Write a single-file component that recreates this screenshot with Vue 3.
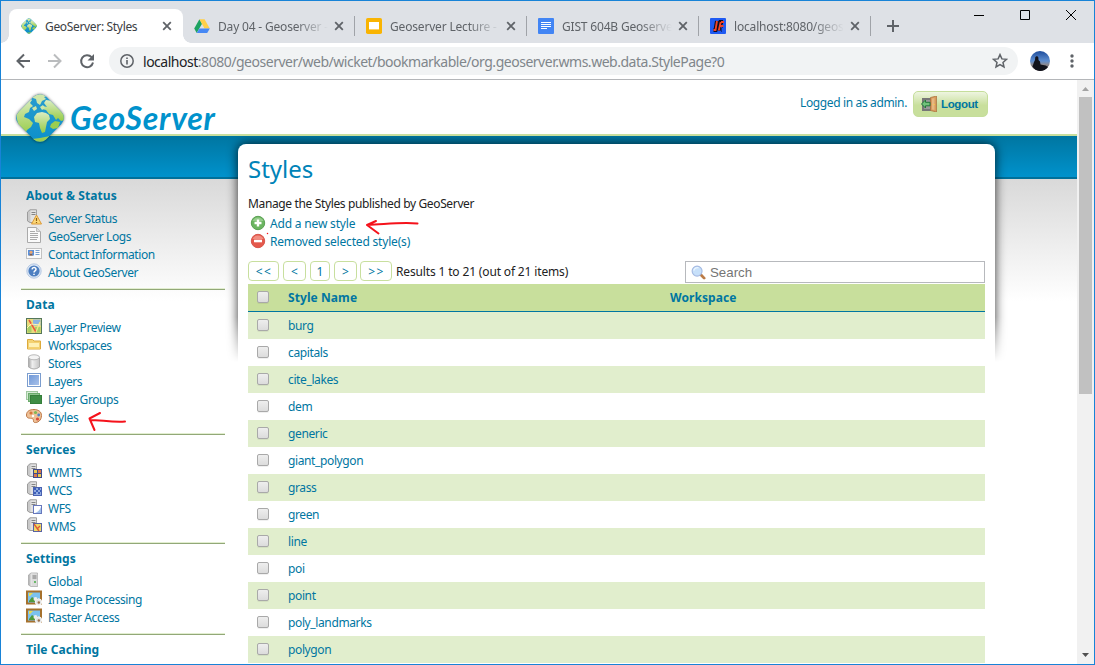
<script setup>
const tabs = [
  { title: 'Day 04 - Geoserver -', icon: 'drive' },
  { title: 'Geoserver Lecture - G', icon: 'slides' },
  { title: 'GIST 604B Geoserver', icon: 'docs' },
  { title: 'localhost:8080/geose', icon: 'jetty' },
]

const sections = [
  {
    title: 'About & Status',
    items: [
      { label: 'Server Status', icon: 'status' },
      { label: 'GeoServer Logs', icon: 'page' },
      { label: 'Contact Information', icon: 'card' },
      { label: 'About GeoServer', icon: 'help' },
    ],
  },
  {
    title: 'Data',
    items: [
      { label: 'Layer Preview', icon: 'map' },
      { label: 'Workspaces', icon: 'folder' },
      { label: 'Stores', icon: 'database' },
      { label: 'Layers', icon: 'layer' },
      { label: 'Layer Groups', icon: 'layers' },
      { label: 'Styles', icon: 'palette' },
    ],
  },
  {
    title: 'Services',
    items: [
      { label: 'WMTS', icon: 'wmts' },
      { label: 'WCS', icon: 'wcs' },
      { label: 'WFS', icon: 'wfs' },
      { label: 'WMS', icon: 'wms' },
    ],
  },
  {
    title: 'Settings',
    items: [
      { label: 'Global', icon: 'server' },
      { label: 'Image Processing', icon: 'picture' },
      { label: 'Raster Access', icon: 'picture' },
    ],
  },
  { title: 'Tile Caching', items: [] },
]

const pager = ['<<', '<', '1', '>', '>>']

const rows = [
  'burg', 'capitals', 'cite_lakes', 'dem', 'generic', 'giant_polygon', 'grass',
  'green', 'line', 'poi', 'point', 'poly_landmarks', 'polygon',
]
</script>

<template>
  <div class="window">
    <svg class="defs" width="0" height="0" aria-hidden="true">
      <defs>
        <linearGradient id="gGlobe" x1="0" y1="0" x2="0" y2="1">
          <stop offset="0" stop-color="#dcedc3" /><stop offset="1" stop-color="#96cb45" />
        </linearGradient>
        <linearGradient id="gSea" x1="0" y1="0" x2="0" y2="1">
          <stop offset="0" stop-color="#2a9dcf" /><stop offset="1" stop-color="#0b8fca" />
        </linearGradient>
        <linearGradient id="gGrey" x1="0" y1="0" x2="1" y2="0">
          <stop offset="0" stop-color="#a5a5a5" /><stop offset=".35" stop-color="#efefef" /><stop offset="1" stop-color="#c4c4c4" />
        </linearGradient>
        <linearGradient id="gBlue" x1="0" y1="0" x2="1" y2="1">
          <stop offset="0" stop-color="#6f98d8" /><stop offset="1" stop-color="#a9c2ea" />
        </linearGradient>
        <linearGradient id="gSky" x1="0" y1="0" x2="0" y2="1">
          <stop offset="0" stop-color="#1d4c9c" /><stop offset=".5" stop-color="#5f8fd0" /><stop offset=".68" stop-color="#8b8a92" /><stop offset="1" stop-color="#3c2b2c" />
        </linearGradient>
        <clipPath id="cGlobe"><rect x="-19.5" y="-19.5" width="39" height="39" rx="9" transform="translate(25 25) rotate(45)" /></clipPath>
      </defs>

      <symbol id="i-globe" viewBox="0 0 50 50">
        <g clip-path="url(#cGlobe)">
          <rect width="50" height="50" fill="url(#gSea)" />
          <path fill="url(#gGlobe)" d="M0 16 14 4l3 3-2 3 3 3-3 2-1 4-4 2-1 3 5 2 4 4-2 4-4 3-3 6L3 31Z" />
          <path fill="url(#gGlobe)" d="m22 20 5-1 4 1 3 2 1 4-3 3-1 5-1 5-3 1-2-5-1-5-4-1-1-5Z" />
          <path fill="url(#gGlobe)" d="m31 7 7 1 12 14v5l-4 1-3-3-2 2-3-5-4-1-3-4-4-1 1-3 4 1-3-4Z" />
          <path fill="#cfe7a9" d="m18 3 10-3 4 3-3 1 2 2-4 2-2 4-3-2-1-4-3-1ZM17 15l4-2 1 3-3 2ZM25 14l3-2 2 3-3 2Z" />
          <path fill="#9bcd50" d="m36 31 4-3 5 1-2 6-5 1-3-2ZM17 46l8-1 10-2-8 7h-6Z" />
        </g>
      </symbol>
      <symbol id="i-drive" viewBox="0 0 16 14">
        <path fill="#1da362" d="M5.4.2 8 4.7 2.7 13.9.2 9.4Z" /><path fill="#ffcf48" d="M5.4.2h5.2l5.2 9.2h-5.3Z" /><path fill="#4688f4" d="M5.4 9.4h10.4l-2.6 4.5H2.7Z" />
      </symbol>
      <symbol id="i-slides" viewBox="0 0 16 16"><rect width="16" height="16" rx="1.8" fill="#f9b402" /><rect x="3" y="4" width="10" height="7.4" fill="#fff" /></symbol>
      <symbol id="i-docs" viewBox="0 0 16 16"><rect width="16" height="16" rx="1" fill="#4285f4" /><path stroke="#fff" d="M3 4.5h10M3 6.5h10M3 8.5h10M3 10.5h6" /></symbol>
      <symbol id="i-jetty" viewBox="0 0 16 16"><rect width="16" height="16" rx="1" fill="#1f5af2" /><path d="M7 3 5.500 12H3.500M13 4h-2.500L8.500 12.500M12.500 8h.5M11.500 12h.5" fill="none" stroke="#0b0b20" stroke-width="4" /><path d="M7 3 5.500 12H3.500M10.700 4 8.800 12.500M11 4h3M10 8h3.500" fill="none" stroke="#f04426" stroke-width="1.900" /></symbol>

      <symbol id="i-server" viewBox="0 0 16 16">
        <path d="M2.500 3 5 1h6.500v13.500H5L2.500 13Z" fill="url(#gGrey)" stroke="#aaa" stroke-width=".8" /><path d="M5.500 1.500h5.800v12.600H5.500Z" fill="#dcdcdc" /><path d="M6.500 4h4M6.500 6h4" stroke="#777" /><circle cx="9" cy="10" r=".9" fill="#35a835" />
      </symbol>
      <symbol id="i-box" viewBox="0 0 16 16">
        <path d="M1.500 3 4 .8h6.500v12.700H4L1.500 12Z" fill="#c9c9c9" stroke="#9c9c9c" /><path d="M4.500 1.500h5.600v11.500H4.500Z" fill="#e2e2e2" /><path d="M5.500 3.500h4M5.500 5.500h4" stroke="#858585" />
      </symbol>
      <symbol id="i-status" viewBox="0 0 16 16"><use href="#i-box" /><path d="M10.500 6 15.500 15h-10Z" fill="#fbd775" stroke="#dd9a38" /><path d="M10.500 9v3M10.500 13v1" stroke="#8c5b14" stroke-width="1.200" /></symbol>
      <symbol id="i-page" viewBox="0 0 16 16"><path d="M1.500.5h9l4 4v11h-13Z" fill="#fafafa" stroke="#aaa" /><path d="M10.500.5v4h4" fill="#ddd" stroke="#bbb" /><path d="M4 4.500h5M4 6.500h8M4 8.500h8M4 10.500h8M4 12.500h7" stroke="#aaa" /></symbol>
      <symbol id="i-card" viewBox="0 0 16 16"><rect x=".5" y="3.500" width="15" height="10" fill="#fafafa" stroke="#c2c2c2" /><rect x="2" y="5" width="6" height="5.500" fill="#5b8fd8" /><circle cx="5" cy="7.300" r="1.500" fill="#efa66c" /><path d="M3 10.500q2-3 4 0" fill="#895126" /><path d="M9.500 5.500h4M9.500 7.500h4M9.500 9.500h4" stroke="#79a0d2" /></symbol>
      <symbol id="i-help" viewBox="0 0 16 16"><circle cx="8" cy="8" r="7.200" fill="#dce7f5" stroke="#a9bfdd" stroke-width=".8" /><circle cx="8" cy="8" r="5.600" fill="#4d7fc1" /><path d="M6 6.400C6.200 4 10 4 10 6.300 10 8 8 7.700 8 9.400M8 10.700V12" fill="none" stroke="#fff" stroke-width="1.500" /></symbol>
      <symbol id="i-map" viewBox="0 0 16 16"><rect x=".5" y=".5" width="15" height="15" fill="#e8dc7d" stroke="#55775a" /><path d="M7 1.500h7.500v6H7Z" fill="#8cb4e0" /><path d="M1.500 8h4v6.500h-4ZM9 9h5.500v5.500H9Z" fill="#a8cf67" /><path d="m3 2 7 12" stroke="#ed573e" stroke-width="1.500" /><path d="m14 4-4 10" stroke="#f4e889" stroke-width="1.200" /><path d="m1 10 4-4 9 1" fill="none" stroke="#fff6b0" /></symbol>
      <symbol id="i-folder" viewBox="0 0 16 16"><path d="M1.500 3.500h5l1.500 1.500h6.500v8h-13Z" fill="#f4d272" stroke="#ddaa3c" /><path d="M3 7h10v4H3Z" fill="#fff1b5" /><path d="M2 12.500h12" stroke="#f4cf6b" /></symbol>
      <symbol id="i-database" viewBox="0 0 16 16"><path d="M2.500 3v10q5.500 4 11 0V3Z" fill="url(#gGrey)" stroke="#adadad" /><ellipse cx="8" cy="3.300" rx="5.500" ry="2.500" fill="#f4f4f4" stroke="#b8b8b8" /></symbol>
      <symbol id="i-layer" viewBox="0 0 16 16"><rect x="1.500" y="1.500" width="13" height="13" fill="#fff" stroke="#7b9dce" /><rect x="3" y="3" width="10" height="10" fill="url(#gBlue)" /></symbol>
      <symbol id="i-layers" viewBox="0 0 16 16"><rect x=".5" y="1.500" width="11" height="8" fill="#d7ecd7" stroke="#9fc79f" /><rect x="2.500" y="3.500" width="11" height="8" fill="#8fc48f" stroke="#6cab6c" /><rect x="4.500" y="5.500" width="11" height="8" fill="#3f8d45" stroke="#357f3a" /></symbol>
      <symbol id="i-palette" viewBox="0 0 16 16"><path d="M8 1.500c4 0 7.500 2 7.500 6 0 5-4 7.500-7 7-2-.4 0-3.500-2.300-4C4 10 .5 11 .5 7S4 1.500 8 1.500Z" fill="#edc197" stroke="#bd7746" /><circle cx="5" cy="5" r="1.600" fill="#d8743b" /><circle cx="9.500" cy="4.500" r="1.600" fill="#7fb956" /><circle cx="12.700" cy="7" r="1.400" fill="#4e83c9" /><circle cx="11.500" cy="11" r="1.600" fill="#de4e3b" /><circle cx="7" cy="8" r="1.200" fill="#fff" /></symbol>
      <symbol id="i-wmts" viewBox="0 0 16 16"><use href="#i-box" /><rect x="7" y="6" width="9" height="9" fill="#3f4b8c" /><path d="M8 7h3v3H8ZM12 11h3v3h-3Z" fill="#e9c94d" /><path d="M12 7h3v3h-3ZM8 11h3v3H8Z" fill="#d9764d" /></symbol>
      <symbol id="i-wcs" viewBox="0 0 16 16"><use href="#i-box" /><rect x="7.500" y="6.500" width="8" height="8" fill="#91abe0" stroke="#4a62b2" /><path d="M8 7h2v2H8ZM12 7h2v2h-2ZM10 9h2v2h-2ZM14 9h1v2h-1ZM8 11h2v2H8ZM12 11h2v2h-2Z" fill="#3e60b8" /></symbol>
      <symbol id="i-wfs" viewBox="0 0 16 16"><use href="#i-box" /><rect x="7.500" y="6.500" width="8" height="8" fill="#fff" stroke="#6878bd" /><path d="M9 14q4-1 6-6v6Z" fill="#9ebeea" /></symbol>
      <symbol id="i-wms" viewBox="0 0 16 16"><use href="#i-box" /><rect x="7.500" y="6.500" width="8" height="8" fill="#f0d967" stroke="#5963a4" /><path d="m8 7 5 7M14 9l-3 3" stroke="#df5a37" stroke-width="1.300" /></symbol>
      <symbol id="i-picture" viewBox="0 0 16 16"><rect x="1" y="1.500" width="14" height="12" fill="#7bc2ef" stroke="#a5712d" stroke-width="2" /><path d="M3 11 6 7l3 2 3-1v4H3Z" fill="#4f9b3d" /><path d="M3 3h4l-3 3H3Z" fill="#e7dc54" /><circle cx="12.500" cy="12" r="3.200" fill="#e2e2e2" stroke="#f7f7f7" /><circle cx="12.800" cy="12.500" r="1.200" fill="#9a6e46" /><circle cx="9.500" cy="9" r="2" fill="#ececec" /></symbol>
      <symbol id="i-add" viewBox="0 0 16 16"><circle cx="8" cy="8" r="6.700" fill="#6cb561" stroke="#5ba154" /><path d="M2.500 6a6 6 0 0 1 11 0Z" fill="#96cd8b" /><path d="M8 4.500v7M4.500 8h7" stroke="#fff" stroke-width="2.400" /></symbol>
      <symbol id="i-remove" viewBox="0 0 16 16"><circle cx="8" cy="8" r="6.700" fill="#e4594c" stroke="#d8564c" /><path d="M2.500 6a6 6 0 0 1 11 0Z" fill="#f18d81" /><path d="M4 8h8" stroke="#fff" stroke-width="2.600" /></symbol>
      <symbol id="i-door" viewBox="0 0 16 16"><path d="M1 2h9v13H1Z" fill="#777" /><path d="M3 4h6v9H3Z" fill="#999" /><path d="m9.500 1.500 6-1.500v16l-6-1.500Z" fill="#d79a5d" stroke="#a96f3a" stroke-width=".7" /><path d="M11 2.500 13.500 2v12L11 13.500Z" fill="#e7b780" /><path d="m.5 8 4-4v2.300H9v3.500H4.500V12Z" fill="#71c17a" stroke="#23793a" /><path d="M12.500 8h1v1h-1Z" fill="#ffda3c" /></symbol>
      <symbol id="i-search" viewBox="0 0 16 16"><path d="m10.500 10.500 3.500 3.500" stroke="#bb7c48" stroke-width="3" stroke-linecap="round" /><circle cx="6.500" cy="6.500" r="5.300" fill="#c7e0fa" stroke="#a4b9e2" stroke-width="1.200" /><path d="M3 6a4 4 0 0 1 5-3" fill="none" stroke="#eaf5ff" stroke-width="1.500" /></symbol>
      <symbol id="i-close" viewBox="0 0 10 10"><path d="m1.200 1.200 7.600 7.600M8.800 1.200 1.200 8.800" stroke="#5f6368" stroke-width="1.800" /></symbol>
    </svg>

    <div class="tabstrip">
      <div class="tab active">
        <svg class="fav"><use href="#i-globe" /></svg>
        <span class="tab-title">GeoServer: Styles</span>
        <svg class="close"><use href="#i-close" /></svg>
      </div>
      <div v-for="t in tabs" :key="t.icon" class="tab">
        <svg class="fav"><use :href="'#i-' + t.icon" /></svg>
        <span class="tab-title faded">{{ t.title }}</span>
        <svg class="close"><use href="#i-close" /></svg>
      </div>
      <svg class="plus" viewBox="0 0 12 12"><path d="M6 0v12M0 6h12" stroke="#5f6368" stroke-width="2" /></svg>
      <svg class="controls" viewBox="0 0 104 12" fill="none" stroke="#000"><path d="M0 6.500h10M46.500 1.500h9v9h-9ZM92 1l10 10M102 1 92 11" /></svg>
    </div>

    <div class="toolbar">
      <svg class="nav" viewBox="0 0 82 16" fill="none" stroke-width="2">
        <path d="M14 8H2M8 1.500 1.500 8 8 14.500" stroke="#5f6368" />
        <path d="M32 8h12M38 1.500 44.500 8 38 14.500" stroke="#babcbe" />
        <path d="M75.600 4.200A6 6 0 1 0 77 9.500" stroke="#5f6368" /><path d="M78 1v6.500h-6.500Z" fill="#5f6368" />
      </svg>
      <div class="omnibox">
        <svg class="info" viewBox="0 0 14 14"><circle cx="7" cy="7" r="6.200" fill="none" stroke="#5f6368" stroke-width="1.500" /><path d="M7 6v4.500M7 3.400v1.500" stroke="#5f6368" stroke-width="1.600" /></svg>
        <span class="url"><b>localhost</b>:8080/geoserver/web/wicket/bookmarkable/org.geoserver.wms.web.data.StylePage?0</span>
        <svg class="star" viewBox="0 0 16 16"><path d="m8 1.600 1.900 4.300 4.600.4-3.500 3.100 1 4.600-4-2.400L4 14l1-4.600L1.500 6.300l4.600-.4Z" fill="none" stroke="#5f6368" stroke-width="1.500" /></svg>
      </div>
      <svg class="avatar" viewBox="0 0 20 20"><circle cx="10" cy="10" r="10" fill="url(#gSky)" /><path d="M2.500 15.500 4 11l1-2 .3-3L7 5l1.300 1.300L8.500 9l1.500 1.500.5 3 5 1 2.500 1.500Q15 20 10 20 5 19.500 2.500 15.500Z" fill="#11131c" /></svg>
      <svg class="kebab" viewBox="0 0 4 14"><g fill="#5f6368"><circle cx="2" cy="2" r="1.700" /><circle cx="2" cy="7" r="1.700" /><circle cx="2" cy="12" r="1.700" /></g></svg>
    </div>

    <div class="viewport">
      <div class="page">
        <header class="head">
          <svg class="logo"><use href="#i-globe" /></svg>
          <span class="brand">GeoServer</span>
          <span class="who">Logged in as admin.</span>
          <button class="logout"><svg><use href="#i-door" /></svg>Logout</button>
        </header>
        <div class="band"></div>
        <div class="body">
          <nav class="side">
            <section v-for="s in sections" :key="s.title">
              <h3>{{ s.title }}</h3>
              <ul>
                <li v-for="i in s.items" :key="i.label">
                  <svg><use :href="'#i-' + i.icon" /></svg><span>{{ i.label }}</span>
                </li>
              </ul>
            </section>
          </nav>
          <div class="panel-wrap">
            <div class="shade"></div>
            <main class="panel">
              <h1>Styles</h1>
              <p class="intro">Manage the Styles published by GeoServer</p>
              <div class="action"><svg><use href="#i-add" /></svg><span>Add a new style</span></div>
              <div class="action"><svg><use href="#i-remove" /></svg><span>Removed selected style(s)</span></div>
              <div class="pager">
                <span v-for="(p, n) in pager" :key="p" class="pg" :class="'pg' + n">{{ p }}</span>
                <span class="results">Results 1 to 21 (out of 21 items)</span>
                <div class="search"><svg><use href="#i-search" /></svg>Search</div>
              </div>
              <div class="row th"><i class="cb"></i><span class="name">Style Name</span><span>Workspace</span></div>
              <div v-for="(r, n) in rows" :key="r" class="row" :class="{ odd: n % 2 === 0 }"><i class="cb"></i><span class="name">{{ r }}</span></div>
            </main>
          </div>
        </div>
      </div>
      <div class="scroll">
        <svg viewBox="0 0 7 4"><path d="M3.500 0 7 4H0Z" fill="#a3a3a3" /></svg>
        <div class="thumb"></div>
        <svg class="down" viewBox="0 0 7 4"><path d="M3.500 4 7 0H0Z" fill="#505050" /></svg>
      </div>
    </div>

    <svg class="ink" viewBox="0 0 1095 665" fill="none" stroke="#f5121b" stroke-width="2" stroke-linecap="round" stroke-linejoin="round">
      <path d="M417.500 223.500C402 222 388 224 367.500 225M376 221 367 225 378.500 233.500" />
      <path d="M125 421.500C112 422.500 101 420 90 420M100 413 89.500 418.500 94.500 430" />
      <path d="M267.500 233.500v.1" stroke-width="1.500" />
    </svg>
  </div>
</template>

<style>
body { margin: 0; overflow: hidden; background: #fff; }
</style>

<style scoped>
* { box-sizing: border-box; }
.window { position: relative; width: 1095px; height: 665px; border: 1px solid #1883d7; display: flex; flex-direction: column; overflow: hidden; background: #fff; font-family: "Noto Sans", "Liberation Sans", sans-serif; font-size: 12px; color: #0076a1; white-space: nowrap; }
.defs { position: absolute; }
svg { flex: none; display: block; }

.tabstrip { height: 42px; background: #dee1e6; display: flex; padding: 8px 0 0 8px; flex: none; position: relative; }
.tab { width: 172px; height: 34px; display: flex; align-items: center; padding-left: 11px; color: #5f6368; position: relative; }
.tab.active { width: 174px; padding-left: 12px; background: #fff; border-radius: 8px 8px 0 0; color: #3c4043; }
.tab.active::before, .tab.active::after { content: ""; position: absolute; bottom: 0; width: 8px; height: 8px; }
.tab.active::before { left: -8px; background: radial-gradient(circle at 0 0, #dee1e6 7.5px, #fff 8px); }
.tab.active::after { right: -8px; background: radial-gradient(circle at 100% 0, #dee1e6 7.5px, #fff 8px); }
.tab:not(.active)::after { content: ""; position: absolute; right: 0; top: 7px; height: 20px; width: 1px; background: #a0a3a8; }
.fav { width: 16px; height: 16px; }
.tab-title { margin-left: 8px; letter-spacing: -.33px; }
.tab.active .tab-title { width: 117px; }
.tab-title.faded { width: 116px; letter-spacing: -.18px; -webkit-mask-image: linear-gradient(90deg, #000 78px, transparent 110px); mask-image: linear-gradient(90deg, #000 78px, transparent 110px); }
.close { width: 10px; height: 10px; }
.plus { width: 12px; height: 12px; margin: 11px 0 0 16px; }
.controls { position: absolute; left: 973px; top: 8px; width: 104px; height: 12px; }

.toolbar { height: 37px; flex: none; display: flex; align-items: center; border-bottom: 1px solid #b4b6b9; padding-left: 15px; }
.nav { width: 82px; height: 16px; }
.omnibox { margin-left: 11px; width: 909px; height: 28px; border-radius: 14px; background: #f1f3f4; display: flex; align-items: center; padding: 0 10px 0 11px; color: #80868b; }
.info { width: 14px; height: 14px; }
.url { margin-left: 9px; font-size: 14px; flex: 1; letter-spacing: -.48px; }
.url b { font-weight: 400; color: #202124; }
.star { width: 16px; height: 16px; }
.avatar { width: 20px; height: 20px; margin-left: 12px; }
.kebab { width: 4px; height: 14px; margin-left: 20px; }

.viewport { flex: 1; display: flex; min-height: 0; }
.page { flex: 1; display: flex; flex-direction: column; min-width: 0; }
.head { height: 56px; flex: none; border-bottom: 2px solid #c8df9e; display: flex; position: relative; }
.logo { position: absolute; left: 14px; top: 13px; width: 50px; height: 50px; z-index: 3; filter: drop-shadow(0 0 1.500px rgba(0, 0, 0, .55)); }
.brand { margin: 14px 0 0 69px; width: 160px; font: italic 700 32px/48px Lato, sans-serif; color: #0092cc; letter-spacing: .75px; }
.who { margin: 14px 0 0 auto; line-height: 18px; letter-spacing: -.36px; }
.logout { width: 75px; height: 26px; margin: 11px 89px 0 6px; border: 1px solid #c5de9b; border-radius: 5px; background: linear-gradient(#eef5e0, #c8df9c 55%); color: #0076a1; font: bold 11.500px "Liberation Sans", Arial, sans-serif; letter-spacing: -.35px; display: flex; align-items: center; padding: 0 0 1px 7px; gap: 4px; }
.logout svg { width: 16px; height: 16px; }
.band { height: 43px; flex: none; background: linear-gradient(#0076a1, #0092cc); border-bottom: 2px solid #00709a; }
.body { flex: 1; display: flex; background: linear-gradient(#d9d9d9, #fff 122px); }
.side { width: 204px; margin: 2px 0 0 20px; }
.side section { border-bottom: 1px solid #92a878; box-shadow: inset 0 -1px #e2eed0; padding-bottom: 8px; }
.side section:last-child { border: 0; box-shadow: none; }
h3 { margin: 0 0 0 5px; height: 28px; line-height: 29px; font-size: 12px; font-weight: 700; letter-spacing: .08px; }
ul { margin: 0; padding: 0 0 0 5px; list-style: none; }
li { height: 18px; display: flex; align-items: center; line-height: 18px; letter-spacing: -.4px; }
li svg { width: 16px; height: 16px; margin: -3px 6px 0 0; }
li span { padding-top: 1px; }

.panel-wrap { position: relative; width: 757px; margin: -35px 0 0 13px; }
.shade { position: absolute; left: -16px; right: -16px; top: -8px; height: 226px; overflow: hidden; -webkit-mask-image: linear-gradient(#000 80%, transparent); mask-image: linear-gradient(#000 80%, transparent); }
.shade::before { content: ""; position: absolute; left: 16px; right: 16px; top: 8px; height: 400px; border-radius: 8px; box-shadow: 0 0 11px rgba(0, 0, 0, .8); }
.panel { position: relative; height: 560px; padding: 9px 10px 0; background: #fff; border-radius: 8px; }
h1 { margin: 0; font-weight: 400; font-size: 24px; line-height: 31px; color: #0083b8; letter-spacing: 0; }
.intro { margin: 11px 0 1px; line-height: 18px; color: #222; letter-spacing: -.36px; }
.action { display: flex; height: 18px; line-height: 18px; align-items: center; padding: 1px 0 0 2px; letter-spacing: -.18px; }
.action svg { width: 16px; height: 16px; margin: -2px 4px 0 0; }
.pager { display: flex; height: 32px; padding-top: 9px; align-items: flex-start; margin-top: 2px; }
.pg { height: 20px; line-height: 20px; border: 1px solid #c8df9e; border-radius: 4px; width: 23px; text-align: center; margin-right: 4px; }
.pg0, .pg4 { letter-spacing: 1.5px; padding-left: 1px; }
.pg0 { width: 31px; }
.pg2 { width: 20px; }
.pg3 { margin-right: 3px; }
.pg4 { width: 32px; }
.results { color: #222; line-height: 21px; letter-spacing: -.15px; }
.search { margin-left: auto; width: 300px; height: 22px; border: 1px solid #b7b9bd; font: 13.300px "Liberation Sans", Arial, sans-serif; color: #757575; display: flex; align-items: center; padding-left: 5px; gap: 4px; background: #fff; }
.search svg { width: 15px; height: 15px; }
.row { height: 27px; display: flex; align-items: center; padding-left: 9px; letter-spacing: -.38px; }
.row.th { height: 28px; background: #c8df9c; border-bottom: 1px solid #0076a1; font-weight: 700; letter-spacing: .08px; }
.row.odd { background: #e1eecd; }
.cb { width: 12px; height: 12px; border: 1px solid #a9a9a9; border-radius: 2px; background: linear-gradient(#eee, #dcdcdc); margin: -1px 19px 0 0; box-shadow: 0 1px 0 rgba(0, 0, 0, .06); }
.name { width: 382px; }

.scroll { width: 17px; background: #f1f1f1; display: flex; flex-direction: column; align-items: center; }
.scroll svg { width: 7px; height: 4px; margin: 7px 0 6px; }
.thumb { width: 13px; height: 297px; background: #c1c1c1; }
.scroll .down { margin: auto 0 7px; }
.ink { position: absolute; left: -1px; top: -1px; width: 1095px; height: 665px; pointer-events: none; }
</style>
